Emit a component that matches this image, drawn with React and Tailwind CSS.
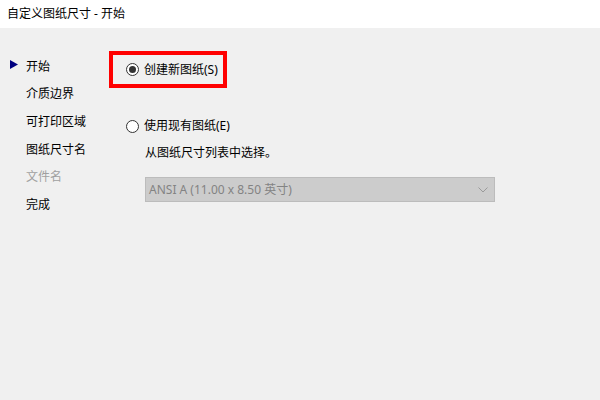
const font = { fontFamily: '"Microsoft YaHei UI", "Noto Sans", "Noto Sans CJK SC", sans-serif' };

const steps = [
  { label: "开始", current: true },
  { label: "介质边界" },
  { label: "可打印区域" },
  { label: "图纸尺寸名" },
  { label: "文件名", disabled: true },
  { label: "完成" },
];

const Radio = ({ checked }) => (
  <span className="flex h-[13px] w-[13px] shrink-0 items-center justify-center rounded-full border border-[#333333] bg-white">
    {checked && <span className="h-[7px] w-[7px] rounded-full bg-[#333333]" />}
  </span>
);

export default function App() {
  return (
    <div
      className="flex h-[400px] w-[600px] flex-col bg-[#f0f0f0] text-[12px] text-black"
      style={font}
    >
      <div className="flex h-[28px] items-center bg-white px-[7px] text-[12px]">
        自定义图纸尺寸 - 开始
      </div>

      <div className="flex flex-1">
        <ul className="w-[109px] shrink-0 pt-[25px] pl-[10px]">
          {steps.map((s) => (
            <li key={s.label} className="flex h-[27.6px] items-center leading-[20px]">
              <span className="flex w-[16px] items-center">
                {s.current && (
                  <svg width="8" height="9" viewBox="0 0 8 9" className="-mt-[4px]">
                    <path d="M0 0 L8 4.5 L0 9 Z" fill="#000080" />
                  </svg>
                )}
              </span>
              <span className={s.disabled ? "text-[#a0a0a0]" : ""}>{s.label}</span>
            </li>
          ))}
        </ul>

        <div className="flex flex-col pt-[23px]">
          <div className="flex h-[37px] w-[118px] items-center border-[4px] border-[#ff0000] pl-[13px]">
            <label className="flex items-center gap-[5px] leading-[20px]">
              <Radio checked />
              <span>创建新图纸(S)</span>
            </label>
          </div>

          <label className="mt-[28px] ml-[17px] flex h-[20px] items-center gap-[5px] leading-[20px]">
            <Radio />
            <span>使用现有图纸(E)</span>
          </label>

          <p className="mt-[7px] ml-[36px] h-[20px] leading-[20px]">从图纸尺寸列表中选择。</p>

          <div className="mt-[14px] ml-[36px] flex h-[25px] w-[350px] items-center justify-between border border-[#bcbcbc] bg-[#cccccc] pl-[3px] pr-[6px] leading-[20px] text-[#838383]">
            <span>ANSI A (11.00 x 8.50 英寸)</span>
            <svg width="10" height="6" viewBox="0 0 10 6">
              <path d="M0.5 0.5 L5 5 L9.5 0.5" fill="none" stroke="#9a9a9a" strokeWidth="1" />
            </svg>
          </div>
        </div>
      </div>
    </div>
  );
}
